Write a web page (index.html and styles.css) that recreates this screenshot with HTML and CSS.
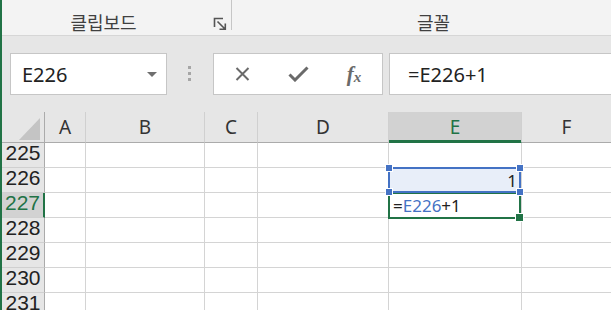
FILE: index.html
```html
<!DOCTYPE html>
<html lang="ko">
<head>
<meta charset="utf-8">
<title>Excel</title>
<link rel="stylesheet" href="styles.css">
</head>
<body>
<div class="ribbon">
  <div class="group g-clip">
    <span class="glabel clip-label">클립보드</span>
    <svg class="launcher" width="14" height="14" viewBox="0 0 14 14"><path d="M1.5 10V1.5H10" fill="none" stroke="#555" stroke-width="1.6"/><path d="M4.5 4.5L12 12M6.5 12.3H12.3V6.5" fill="none" stroke="#555" stroke-width="1.6"/></svg>
    <span class="sep"></span>
  </div>
  <div class="group g-font">
    <span class="glabel font-label">글꼴</span>
  </div>
</div>
<div class="fbar">
  <div class="namebox"><span>E226</span><svg width="10" height="5" viewBox="0 0 10 5"><path d="M0 0H10L5 5Z" fill="#6f6f6f"/></svg></div>
  <div class="grip"><i></i><i></i><i></i></div>
  <div class="fbtns">
    <span><svg width="15" height="14" viewBox="0 0 15 14"><path d="M1.5 1L13.5 13M13.5 1L1.5 13" stroke="#6a6a6a" stroke-width="2" fill="none"/></svg></span>
    <span><svg width="21" height="16" viewBox="0 0 21 16"><path d="M1.5 8.5L7 14L19.5 1.5" stroke="#6a6a6a" stroke-width="3" fill="none"/></svg></span>
    <span class="fx"><i class="fx-f">f</i><i class="fx-x">x</i></span>
  </div>
  <div class="finput">=E226+1</div>
</div>
<div class="sheet">
  <div class="ch corner"><svg width="43" height="30" viewBox="0 0 43 30"><path d="M38 6V28H17Z" fill="#c4c4c4"/></svg></div>
  <div class="ch">A</div><div class="ch">B</div><div class="ch">C</div><div class="ch">D</div><div class="ch sel">E</div><div class="ch last">F</div>

  <div class="rh">225</div><div class="c"></div><div class="c"></div><div class="c"></div><div class="c"></div><div class="c"></div><div class="c last"></div>
  <div class="rh">226</div><div class="c"></div><div class="c"></div><div class="c"></div><div class="c"></div>
  <div class="c hold"><div class="refbox">1<i class="h tl"></i><i class="h tr"></i><i class="h bl"></i><i class="h br"></i></div></div>
  <div class="c last"></div>
  <div class="rh rsel">227</div><div class="c"></div><div class="c"></div><div class="c"></div><div class="c"></div>
  <div class="c hold"><div class="active">=<span class="ref">E226</span>+1<i class="fill"></i></div></div>
  <div class="c last"></div>
  <div class="rh">228</div><div class="c"></div><div class="c"></div><div class="c"></div><div class="c"></div><div class="c"></div><div class="c last"></div>
  <div class="rh">229</div><div class="c"></div><div class="c"></div><div class="c"></div><div class="c"></div><div class="c"></div><div class="c last"></div>
  <div class="rh">230</div><div class="c"></div><div class="c"></div><div class="c"></div><div class="c"></div><div class="c"></div><div class="c last"></div>
  <div class="rh">231</div><div class="c"></div><div class="c"></div><div class="c"></div><div class="c"></div><div class="c"></div><div class="c last"></div>
</div>
</body>
</html>
```
FILE: styles.css
```css
* { box-sizing: border-box; }
html, body { margin: 0; padding: 0; }
body {
  width: 611px;
  height: 310px;
  overflow: hidden;
  border-left: 2px solid #217346;
  background: #e6e6e6;
  color: #222;
  font-family: "Noto Sans", "Liberation Sans", sans-serif;
}

/* ribbon */
.ribbon {
  height: 36px;
  display: flex;
  background: #f3f3f3;
  border-bottom: 1px solid #d6d6d6;
}
.group { display: flex; height: 35px; }
.glabel {
  font-family: "Noto Sans CJK KR", "Noto Sans", sans-serif;
  font-size: 18px;
  line-height: 18px;
  padding-top: 13px;
  color: #404040;
}
.clip-label { width: 203px; text-align: center; }
.launcher { margin-left: 8px; margin-top: 17px; }
.sep { width: 1px; height: 30px; margin-left: 4px; background: #c6c6c6; }
.font-label { margin-left: 185px; }

/* formula bar */
.fbar {
  height: 76px;
  display: flex;
  align-items: flex-start;
  padding-top: 17px;
}
.namebox {
  margin-left: 8px;
  width: 157px;
  height: 42px;
  background: #fff;
  border: 1px solid #c6c6c6;
  display: flex;
  align-items: center;
  justify-content: space-between;
  padding: 0 9px 0 11px;
  font-size: 20px;
  color: #222;
}
.grip {
  margin-left: 21px;
  width: 4px;
  display: flex;
  flex-direction: column;
  gap: 3px;
  padding-top: 13px;
}
.grip i { display: block; width: 3px; height: 3px; background: #a6a6a6; }
.fbtns {
  margin-left: 21px;
  width: 170px;
  height: 42px;
  display: flex;
  background: #fff;
  border: 1px solid #c6c6c6;
}
.fbtns span {
  width: 56px;
  display: flex;
  align-items: center;
  justify-content: center;
}
.fx { font-family: "Liberation Serif", serif; color: #6a6a6a; font-weight: bold; }
.fx i { font-style: italic; }
.fx-f { font-size: 21px; }
.fx-x { font-size: 15px; margin-top: 6px; }
.finput {
  margin-left: 6px;
  flex: 1;
  height: 42px;
  background: #fff;
  border: 1px solid #c6c6c6;
  border-right: 0;
  padding-left: 18px;
  display: flex;
  align-items: center;
  font-size: 20px;
  color: #222;
}

/* sheet */
.sheet {
  display: grid;
  grid-template-columns: 43px 41px 119px 53px 131px 133px 1fr;
  grid-template-rows: 31px repeat(7, 25px);
  background: #fff;
}
.ch {
  background: #e6e6e6;
  border-right: 1px solid #d0d0d0;
  border-bottom: 1px solid #ababab;
  font-size: 19px;
  line-height: 30px;
  text-align: center;
  color: #333;
}
.ch.corner { border-right: 1px solid #ababab; line-height: 0; }
.ch.sel {
  background: #d2d2d2;
  color: #217346;
  border-bottom-color: #217346;
  box-shadow: inset 0 -2px 0 #217346;
}
.ch.last, .c.last { border-right: 0; }
.rh {
  background: #e6e6e6;
  border-right: 1px solid #ababab;
  border-bottom: 1px solid #d0d0d0;
  font-family: "Liberation Sans", "Noto Sans", sans-serif;
  font-size: 21px;
  line-height: 20px;
  text-align: center;
  color: #222;
}
.rh.rsel {
  background: #d2d2d2;
  color: #217346;
  border-right: 2px solid #217346;
}
.c {
  border-right: 1px solid #d4d4d4;
  border-bottom: 1px solid #d4d4d4;
  font-size: 17px;
  line-height: 24px;
}
.hold { position: relative; }
.refbox {
  position: absolute;
  left: -1px; top: -1px; right: 0; bottom: -1px;
  border: 2px solid #4472c4;
  background: #e8eef9;
  text-align: right;
  padding-right: 2px;
  color: #222;
  z-index: 2;
}
.h {
  position: absolute;
  width: 6px; height: 6px;
  background: #4472c4;
  box-shadow: 0 0 0 1px #fff;
}
.h.tl { left: -4px; top: -4px; }
.h.tr { right: -4px; top: -4px; }
.h.bl { left: -4px; bottom: -4px; }
.h.br { right: -4px; bottom: -4px; }
.active {
  position: absolute;
  left: -1px; top: -1px; right: 0; bottom: -2px;
  border: 2px solid #217346;
  padding-left: 3px;
  color: #222;
  z-index: 1;
  white-space: nowrap;
}
.ref { color: #4472c4; }
.fill {
  position: absolute;
  right: -4px; bottom: -4px;
  width: 7px; height: 7px;
  background: #217346;
  box-shadow: 0 0 0 1px #fff;
}
```
